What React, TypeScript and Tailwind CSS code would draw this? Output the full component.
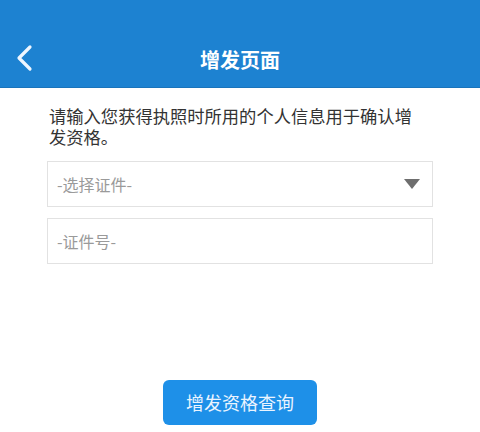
export default function App() {
  return (
    <div
      className="w-[480px] h-[432px] bg-white flex flex-col"
      style={{ fontFamily: '"Noto Sans CJK SC", "Liberation Sans", sans-serif' }}
    >
      {/* header */}
      <div className="h-[88px] bg-[#1d82d1] border-b border-[#1a74bb] flex items-end pb-[12px] relative">
        <svg className="absolute left-[14px] top-[44px]" width="20" height="28" viewBox="0 0 20 28">
          <path d="M16 3 L5 14 L16 25" fill="none" stroke="#eef6ff" strokeWidth="3.2" strokeLinecap="round" strokeLinejoin="round" />
        </svg>
        <h1 className="w-full text-center text-white text-[20px] font-bold leading-[30px]">增发页面</h1>
      </div>

      <div className="px-[47px]">
        <p className="mt-[17px] pl-[2px] w-[370px] text-[17.3px] leading-[21px] text-[#333]">
          请输入您获得执照时所用的个人信息用于确认增发资格。
        </p>

        <div className="mt-[14px] h-[46px] border border-[#e2e2e2] flex items-center justify-between pl-[9px] pr-[12px]">
          <span className="text-[16px] text-[#9a9a9a]">-选择证件-</span>
          <svg width="16" height="10" viewBox="0 0 16 10">
            <path d="M0 0 H16 L8 10 Z" fill="#6e6e6e" />
          </svg>
        </div>

        <div className="mt-[11px] h-[46px] border border-[#e2e2e2] flex items-center pl-[9px]">
          <span className="text-[16px] text-[#9a9a9a]">-证件号-</span>
        </div>
      </div>

      <div className="mt-auto mb-[7px] flex justify-center">
        <button className="w-[154px] h-[45px] rounded-[6px] bg-[#1e90e8] text-[#eaf4ff] text-[18px]">
          增发资格查询
        </button>
      </div>
    </div>
  );
}
